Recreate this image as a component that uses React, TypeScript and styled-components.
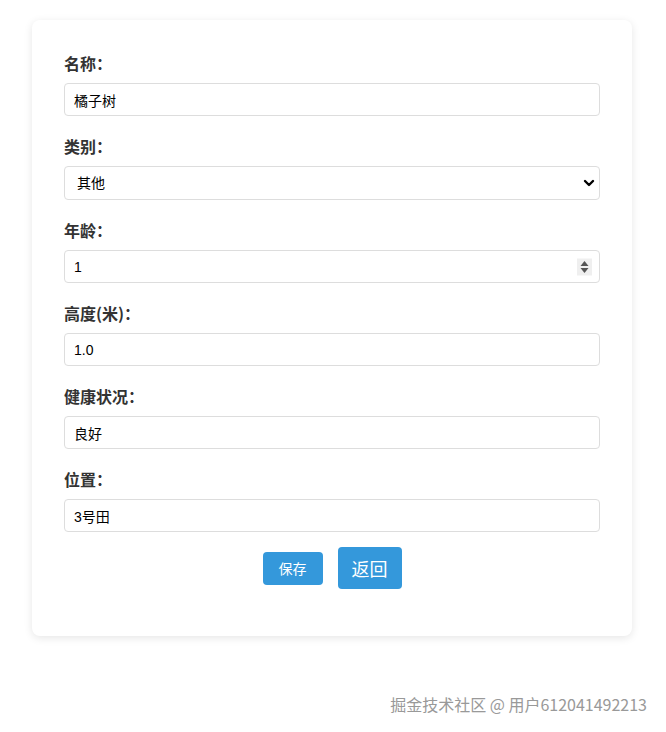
import * as React from 'react';
import styled, { createGlobalStyle } from 'styled-components';

const GlobalStyle = createGlobalStyle`
  html, body { margin: 0; padding: 0; background: #ffffff; }
  body {
    font-family: "Liberation Sans", Arial, "Noto Sans CJK SC", sans-serif;
    color: #333;
  }
  * { box-sizing: border-box; }
`;

const Page = styled.div`
  position: relative;
  min-height: 732px;
  padding-top: 20px;
`;

const Card = styled.form`
  width: 600px;
  margin-left: 32px;
  background: #fff;
  border-radius: 8px;
  box-shadow: 0 2px 8px rgba(0, 0, 0, 0.1);
  padding: 32px 32px 47px;
`;

const Fields = styled.div`
  display: flex;
  flex-direction: column;
  gap: 19px;
`;

const Group = styled.div`
  display: flex;
  flex-direction: column;
  gap: 9px;
`;

const Label = styled.label`
  font-family: "Noto Sans CJK SC", sans-serif;
  font-weight: 700;
  font-size: 16px;
  line-height: 22px;
  color: #333;
`;

const Field = styled.div`
  position: relative;
`;

const Input = styled.input`
  display: block;
  width: 100%;
  height: 33px;
  padding: 0 9px;
  border: 1px solid #ddd;
  border-radius: 4px;
  background: #fff;
  font-family: "Liberation Sans", Arial, "Noto Sans CJK SC", sans-serif;
  font-size: 14px;
  color: #000;
  outline: none;
  -moz-appearance: textfield;
  &::-webkit-inner-spin-button,
  &::-webkit-outer-spin-button { -webkit-appearance: none; margin: 0; }
`;

const Select = styled.select`
  display: block;
  width: 100%;
  height: 34px;
  padding: 0 12px;
  border: 1px solid #ddd;
  border-radius: 4px;
  background: #fff;
  font-family: "Liberation Sans", Arial, "Noto Sans CJK SC", sans-serif;
  font-size: 14px;
  color: #000;
  appearance: none;
  outline: none;
`;

const Chevron = styled.svg`
  position: absolute;
  right: 5px;
  top: 50%;
  transform: translateY(-50%);
  pointer-events: none;
`;

const Spinner = styled.span`
  position: absolute;
  right: 8px;
  top: 50%;
  transform: translateY(-50%);
  width: 15px;
  height: 17px;
  background: #efefef;
  display: flex;
  align-items: center;
  justify-content: center;
  pointer-events: none;
`;

const Actions = styled.div`
  display: flex;
  justify-content: center;
  align-items: center;
  gap: 15px;
  margin-top: 15px;
`;

const Button = styled.button<{ $big?: boolean }>`
  border: none;
  border-radius: 4px;
  background: #3498db;
  color: #fff;
  font-family: "Noto Sans CJK SC", sans-serif;
  font-size: ${p => (p.$big ? '18px' : '14px')};
  padding: ${p => (p.$big ? '0 14px' : '0 16px')};
  height: ${p => (p.$big ? '42px' : '33px')};
  cursor: pointer;
`;

const Watermark = styled.div`
  position: absolute;
  right: 19px;
  top: 692px;
  font-family: "Noto Sans CJK SC", sans-serif;
  font-size: 16px;
  color: #999;
  text-shadow: 0 0 2px #fff;
  white-space: nowrap;
`;

export default function App() {
  return (
    <Page>
      <GlobalStyle />
      <Card onSubmit={e => e.preventDefault()}>
        <Fields>
          <Group>
            <Label>名称：</Label>
            <Input type="text" defaultValue="橘子树" />
          </Group>
          <Group>
            <Label>类别：</Label>
            <Field>
              <Select defaultValue="其他">
                <option>果树</option>
                <option>花卉</option>
                <option>其他</option>
              </Select>
              <Chevron width="12" height="12" viewBox="0 0 12 12" fill="none" stroke="#000" strokeWidth="2.4" strokeLinecap="round" strokeLinejoin="round">
                <path d="M2 4l4 4 4-4" />
              </Chevron>
            </Field>
          </Group>
          <Group>
            <Label>年龄：</Label>
            <Field>
              <Input type="number" defaultValue="1" />
              <Spinner>
                <svg width="9" height="13" viewBox="0 0 9 13">
                  <path d="M4.5 0.5 L8.5 5.5 H0.5 Z" fill="#555" />
                  <path d="M4.5 12.5 L8.5 7.5 H0.5 Z" fill="#555" />
                </svg>
              </Spinner>
            </Field>
          </Group>
          <Group>
            <Label>高度(米)：</Label>
            <Input type="text" defaultValue="1.0" />
          </Group>
          <Group>
            <Label>健康状况：</Label>
            <Input type="text" defaultValue="良好" />
          </Group>
          <Group>
            <Label>位置：</Label>
            <Input type="text" defaultValue="3号田" />
          </Group>
        </Fields>
        <Actions>
          <Button type="submit">保存</Button>
          <Button type="button" $big>返回</Button>
        </Actions>
      </Card>
      <Watermark>掘金技术社区 @ 用户612041492213</Watermark>
    </Page>
  );
}
